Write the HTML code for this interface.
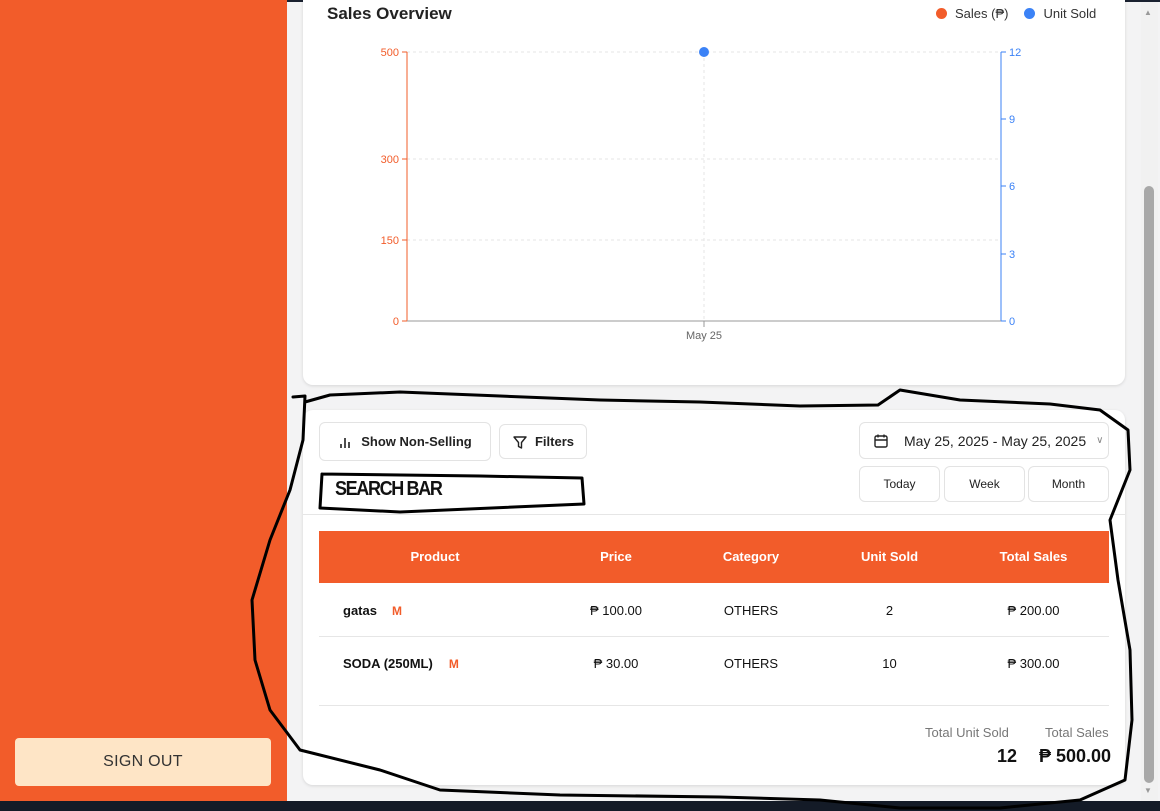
<!DOCTYPE html>
<html><head><meta charset="utf-8"><style>
*{box-sizing:border-box;margin:0;padding:0}
body{width:1160px;height:811px;overflow:hidden;background:#f3f3f4;font-family:"Liberation Sans",sans-serif;position:relative;color:#111}
.abs{position:absolute}
.side{left:0;top:0;width:287px;height:801px;background:#f25c2a}
.so{left:15px;top:738px;width:256px;height:48px;background:#fee5c6;border-radius:4px;text-align:center;line-height:48px;font-size:16px;color:#333;letter-spacing:.3px}
.card{background:#fff;border-radius:10px;box-shadow:0 1px 3px rgba(0,0,0,.12)}
.btn{border:1px solid #e3e3e3;border-radius:6px;background:#fff;font-size:13px;font-weight:bold;color:#222;display:flex;align-items:center;justify-content:center}
.th{top:531px;height:52px;line-height:52px;color:#fff;font-weight:bold;font-size:13px;text-align:center}
.td{font-size:13px;color:#111;text-align:center}
</style></head><body>
<div class="abs" style="left:0;top:0;width:1160px;height:2px;background:#1a2130"></div>
<div class="abs side"></div>
<div class="abs so">SIGN OUT</div>
<div class="abs" style="left:0;top:801px;width:1160px;height:10px;background:#141b27"></div>
<div class="abs" style="left:1141px;top:2px;width:17px;height:799px;background:#f1f1f1"></div>
<div class="abs" style="left:1144px;top:186px;width:10px;height:597px;background:#a8a8a8;border-radius:5px"></div>
<div class="abs" style="left:1144px;top:8px;font-size:8px;color:#999">▲</div>
<div class="abs" style="left:1144px;top:786px;font-size:8px;color:#999">▼</div>

<div class="abs card" style="left:303px;top:-10px;width:822px;height:395px"></div>
<div class="abs" style="left:327px;top:4px;font-size:17px;font-weight:bold;color:#222">Sales Overview</div>
<div class="abs" style="left:936px;top:6px;font-size:13px;color:#333;display:flex;align-items:center">
<span style="width:11px;height:11px;border-radius:50%;background:#f25c2a;margin-right:8px"></span>Sales (₱)
<span style="width:11px;height:11px;border-radius:50%;background:#3b82f6;margin:0 8px 0 16px"></span>Unit Sold</div>
<svg class="abs" style="left:0;top:0" width="1160" height="400" font-family="Liberation Sans" font-size="11">
<g stroke="#e5e5e5" stroke-dasharray="3 3">
<line x1="407" y1="52" x2="1001" y2="52"/><line x1="407" y1="159" x2="1001" y2="159"/><line x1="407" y1="240" x2="1001" y2="240"/><line x1="704" y1="52" x2="704" y2="321"/></g>
<line x1="407" y1="52" x2="407" y2="321" stroke="#f25c2a"/>
<g stroke="#f25c2a"><line x1="402" y1="52" x2="407" y2="52"/><line x1="402" y1="159" x2="407" y2="159"/><line x1="402" y1="240" x2="407" y2="240"/><line x1="402" y1="321" x2="407" y2="321"/></g>
<g fill="#f25c2a" text-anchor="end"><text x="399" y="56">500</text><text x="399" y="163">300</text><text x="399" y="244">150</text><text x="399" y="325">0</text></g>
<line x1="1001" y1="52" x2="1001" y2="321" stroke="#3b82f6"/>
<g stroke="#3b82f6"><line x1="1001" y1="52" x2="1006" y2="52"/><line x1="1001" y1="119" x2="1006" y2="119"/><line x1="1001" y1="186" x2="1006" y2="186"/><line x1="1001" y1="254" x2="1006" y2="254"/><line x1="1001" y1="321" x2="1006" y2="321"/></g>
<g fill="#3b82f6"><text x="1009" y="56">12</text><text x="1009" y="123">9</text><text x="1009" y="190">6</text><text x="1009" y="258">3</text><text x="1009" y="325">0</text></g>
<line x1="407" y1="321" x2="1001" y2="321" stroke="#999"/>
<line x1="704" y1="321" x2="704" y2="327" stroke="#999"/>
<text x="704" y="339" fill="#666" text-anchor="middle">May 25</text>
<circle cx="704" cy="52" r="5" fill="#3b82f6"/>
</svg>

<div class="abs card" style="left:303px;top:410px;width:822px;height:375px"></div>
<div class="abs btn" style="left:319px;top:422px;width:172px;height:39px"><svg width="14" height="14" style="margin-right:9px"><path d="M3 13V9M7 13V3M11 13V7" stroke="#222" stroke-width="1.6"/></svg>Show Non-Selling</div>
<div class="abs btn" style="left:499px;top:424px;width:88px;height:35px"><svg width="16" height="16" style="margin-right:7px"><path d="M2 3h12L9.5 8.5V14L6.5 12.5V8.5Z" fill="none" stroke="#222" stroke-width="1.4" stroke-linejoin="round"/></svg>Filters</div>
<div class="abs btn" style="left:859px;top:422px;width:250px;height:37px;font-weight:normal;font-size:14px;justify-content:flex-start;padding-left:13px"><svg width="16" height="16" style="margin-right:15px"><rect x="2" y="3" width="12" height="11" rx="1.5" fill="none" stroke="#222" stroke-width="1.4"/><path d="M2 7h12M5 1.5v3M11 1.5v3" stroke="#222" stroke-width="1.4"/></svg>May 25, 2025 - May 25, 2025<span style="margin-left:10px;color:#888;font-size:10px">∨</span></div>
<div class="abs btn" style="left:859px;top:466px;width:81px;height:36px;font-weight:normal;font-size:12px">Today</div>
<div class="abs btn" style="left:944px;top:466px;width:81px;height:36px;font-weight:normal;font-size:12px">Week</div>
<div class="abs btn" style="left:1028px;top:466px;width:81px;height:36px;font-weight:normal;font-size:12px">Month</div>
<div class="abs" style="left:303px;top:514px;width:822px;height:1px;background:#e6e6e6"></div>

<div class="abs" style="left:319px;top:531px;width:790px;height:52px;background:#f25c2a"></div>
<div class="abs th" style="left:319px;width:232px">Product</div>
<div class="abs th" style="left:551px;width:130px">Price</div>
<div class="abs th" style="left:681px;width:140px">Category</div>
<div class="abs th" style="left:821px;width:137px">Unit Sold</div>
<div class="abs th" style="left:958px;width:151px">Total Sales</div>

<div class="abs td" style="left:343px;top:603px;font-weight:bold">gatas<span style="color:#f25c2a;margin-left:15px;font-size:12px">M</span></div>
<div class="abs td" style="left:551px;top:603px;width:130px">₱ 100.00</div>
<div class="abs td" style="left:681px;top:603px;width:140px">OTHERS</div>
<div class="abs td" style="left:821px;top:603px;width:137px">2</div>
<div class="abs td" style="left:958px;top:603px;width:151px">₱ 200.00</div>
<div class="abs" style="left:319px;top:636px;width:790px;height:1px;background:#e6e6e6"></div>
<div class="abs td" style="left:343px;top:656px;font-weight:bold">SODA (250ML)<span style="color:#f25c2a;margin-left:16px;font-size:12px">M</span></div>
<div class="abs td" style="left:551px;top:656px;width:130px">₱ 30.00</div>
<div class="abs td" style="left:681px;top:656px;width:140px">OTHERS</div>
<div class="abs td" style="left:821px;top:656px;width:137px">10</div>
<div class="abs td" style="left:958px;top:656px;width:151px">₱ 300.00</div>
<div class="abs" style="left:319px;top:705px;width:790px;height:1px;background:#e6e6e6"></div>
<div class="abs" style="left:925px;top:725px;font-size:13px;color:#777">Total Unit Sold</div>
<div class="abs" style="left:1045px;top:725px;font-size:13px;color:#777">Total Sales</div>
<div class="abs" style="left:997px;top:746px;font-size:18px;font-weight:bold">12</div>
<div class="abs" style="left:1039px;top:746px;font-size:18px;font-weight:bold">₱ 500.00</div>

<svg class="abs" style="left:0;top:0" width="1160" height="811" fill="none" stroke="#000" stroke-width="3" stroke-linecap="round" stroke-linejoin="round">
<path d="M293 397 L305 396 L303 440 L290 490 L270 540 L252 600 L255 660 L270 710 L300 750 L380 770 L440 790 L560 795 L720 797 L820 800 L900 808 L1000 808 L1080 800 L1125 780 L1132 720 L1130 650 L1118 580 L1110 520 L1130 470 L1128 430 L1100 410 L1050 404 L960 400 L900 390 L878 405 L800 406 L700 402 L600 400 L500 396 L400 392 L330 395 L305 402"/>
<path d="M322 474 L320 508 L400 512 L584 504 L582 478 L480 476 L322 474"/>
</svg>
<div class="abs" style="left:335px;top:478px;font-size:20px;font-weight:bold;letter-spacing:-1.5px;transform:scaleX(0.9);transform-origin:left">SEARCH BAR</div>
</body></html>
